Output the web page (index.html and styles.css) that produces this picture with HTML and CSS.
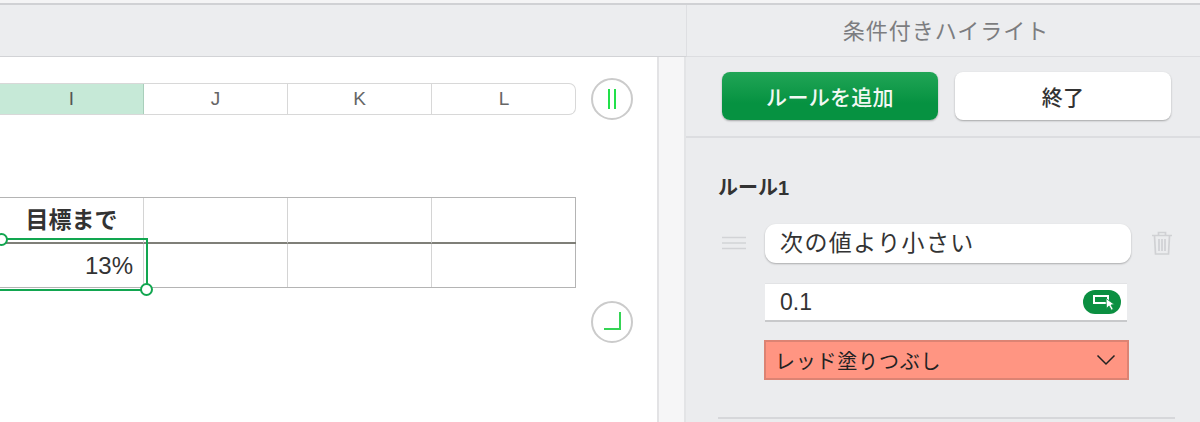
FILE: index.html
```html
<!DOCTYPE html>
<html lang="ja">
<head>
<meta charset="utf-8">
<title>条件付きハイライト</title>
<link rel="stylesheet" href="styles.css">
</head>
<body>
<div class="app">
  <div class="topstrip"></div>
  <div class="header">
    <div class="header-left"></div>
    <div class="header-title">条件付きハイライト</div>
  </div>
  <div class="body">
    <main class="sheet">
      <div class="col-row">
        <div class="columns">
          <div class="col col-active">I</div>
          <div class="col">J</div>
          <div class="col">K</div>
          <div class="col">L</div>
        </div>
        <div class="round-btn">
          <svg width="12" height="24" viewBox="0 0 12 24"><path d="M3 2v20M9 2v20" stroke="#22e04a" stroke-width="2" fill="none"/></svg>
        </div>
      </div>
      <div class="table-row">
        <div class="table">
          <div class="cell cell-head">目標まで</div>
          <div class="cell cell-head"></div>
          <div class="cell cell-head"></div>
          <div class="cell cell-head cell-last"></div>
          <div class="cell cell-value">13%</div>
          <div class="cell"></div>
          <div class="cell"></div>
          <div class="cell cell-last"></div>
          <div class="selection">
            <span class="handle handle-tl"></span>
            <span class="handle handle-br"></span>
          </div>
        </div>
      </div>
      <div class="corner-row">
        <div class="round-btn">
          <svg width="20" height="20" viewBox="0 0 20 20"><path d="M2 17h16V0" stroke="#35d455" stroke-width="2" fill="none"/></svg>
        </div>
      </div>
    </main>
    <div class="scrollbar"></div>
    <aside class="panel">
      <div class="actions">
        <button class="btn btn-green">ルールを追加</button>
        <button class="btn btn-white">終了</button>
      </div>
      <section class="rule">
        <h2 class="rule-title">ルール1</h2>
        <div class="rule-line">
          <svg class="grip" width="24" height="14" viewBox="0 0 24 14"><path d="M0 1.500h24M0 7h24M0 12.500h24" stroke="#d2d3d6" stroke-width="1.600"/></svg>
          <div class="select">次の値より小さい</div>
          <svg class="trash" width="22" height="26" viewBox="0 0 22 26"><path d="M1 5.500h20M7.500 5V2.500h7V5M3.500 6l1 18h13l1-18M8 9v12M11 9v12M14 9v12" stroke="#d0d1d4" stroke-width="1.700" fill="none"/></svg>
        </div>
        <div class="value-field">
          <span>0.1</span>
          <span class="pick">
            <svg width="28" height="18" viewBox="0 0 28 18"><path d="M6 3h14v7H6z" stroke="#fff" stroke-width="2" fill="none"/><path d="M18 5.500l.5 10 2.500-2.600 2.400 4.300 1.900-1-2.300-4.200 3.500-.5z" fill="#fff" stroke="#0b8f41" stroke-width=".8"/></svg>
          </span>
        </div>
        <div class="fill-select">
          <span>レッド塗りつぶし</span>
          <svg width="20" height="12" viewBox="0 0 20 12"><path d="M1.500 1.500l8.500 8.500 8.500-8.500" stroke="#222" stroke-width="1.500" fill="none"/></svg>
        </div>
      </section>
      <div class="rule-divider"></div>
    </aside>
  </div>
</div>
</body>
</html>
```

FILE: styles.css
```css
* { box-sizing: border-box; }
html, body { margin: 0; padding: 0; height: 422px; overflow: hidden; background: #fff; }
body { font-family: "Liberation Sans", "Noto Sans CJK JP", sans-serif; color: #333; }
.app { display: flex; flex-direction: column; width: 1200px; height: 422px; }
.topstrip { height: 5px; border-bottom: 2px solid #d0d1d4; background: #f4f4f5; }
.header { display: flex; height: 52px; flex: none; background: #ecedef; border-bottom: 1px solid #dcdde0; }
.header-left { width: 687px; border-right: 1px solid #dedfe2; border-bottom: 1px solid #d2d3d6; margin-bottom: -1px; }
.header-title { flex: 1; text-align: center; font-size: 22px; line-height: 54px; height: 51px; overflow: hidden; color: #7c7d80; letter-spacing: 1px; padding-left: 5px; }
.body { display: flex; flex: 1; min-height: 0; }
.sheet { width: 657px; flex: none; background: #fff; padding-top: 26px; }
.col-row { display: flex; align-items: center; height: 32px; }
.columns { display: grid; grid-template-columns: repeat(4, 144px); height: 32px; width: 576px; border: 1px solid #d8d8d8; border-left: 0; border-radius: 0 7px 7px 0; }
.col { font-size: 19px; line-height: 30px; text-align: center; color: #666; border-right: 1px solid #d8d8d8; }
.col:last-child { border-right: 0; }
.col-active { background: #c6e9d7; border-right-color: #a9cfbb; color: #555; }
.round-btn { width: 42px; height: 42px; margin-left: 15px; border-radius: 50%; border: 2px solid #cbcbcb; background: #fff; display: flex; align-items: center; justify-content: center; flex: none; }
.table-row { padding-top: 82px; }
.table { position: relative; display: grid; grid-template-columns: repeat(4, 144px); grid-template-rows: 46px 43px; width: 576px; border-top: 1px solid #b4b4b4; border-bottom: 1px solid #b4b4b4; border-right: 1px solid #b4b4b4; height: 91px; }
.cell { border-right: 1px solid #d4d4d4; }
.cell-last { border-right: 0; }
.cell-head { border-bottom: 2px solid #7f7f78; font-size: 23px; font-weight: 700; text-align: center; line-height: 44px; color: #333; }
.cell-value { font-size: 24px; line-height: 43px; text-align: right; padding-right: 10px; color: #333; }
.selection { position: absolute; left: -10px; top: 40px; width: 158px; height: 53px; border: 2px solid #12a650; }
.handle { position: absolute; width: 13px; height: 13px; border-radius: 50%; border: 2px solid #12a650; background: #fff; }
.handle-tl { left: 3px; top: -7px; }
.handle-br { right: -7px; bottom: -7px; }
.corner-row { display: flex; justify-content: flex-end; margin-top: 13px; padding-right: 24px; }
.scrollbar { width: 29px; flex: none; background: #f6f6f7; border-left: 2px solid #e3e3e5; border-right: 2px solid #e3e4e6; }
.panel { flex: 1; background: #ebecee; }
.actions { display: flex; gap: 17px; height: 81px; padding: 15px 29px 0 36px; border-bottom: 2px solid #dcdde0; }
.btn { width: 216px; height: 48px; border: 0; border-radius: 8px; font: 500 21px "Liberation Sans", "Noto Sans CJK JP", sans-serif; letter-spacing: .3px; padding: 0; }
.btn-green { color: #f2f8f4; background: linear-gradient(#21a556, #069241 65%); box-shadow: 0 1px 2px rgba(0,0,0,.3); }
.btn-white { color: #333; background: #fff; box-shadow: 0 1px 2px rgba(0,0,0,.3); }
.rule { padding: 37px 0 0 32px; }
.rule-title { margin: 0; font-size: 20px; line-height: 26px; font-weight: 700; color: #333; }
.rule-line { display: flex; align-items: center; margin-top: 22px; height: 40px; }
.grip { flex: none; margin-left: 4px; }
.select { width: 366px; height: 39px; margin-left: 19px; border-radius: 11px; background: #fff; box-shadow: 0 1px 2px rgba(0,0,0,.28); font-size: 23px; line-height: 38px; padding-left: 15px; color: #333; letter-spacing: 1.400px; white-space: nowrap; }
.trash { flex: none; margin-left: 20px; }
.value-field { display: flex; align-items: center; justify-content: space-between; width: 362px; height: 39px; margin: 20px 0 0 47px; background: #fff; border-bottom: 2px solid #c8c9cb; border-top: 1px solid #e2e3e5; padding: 1px 6px 0 15px; font-size: 23px; color: #333; }
.pick { width: 38px; height: 24px; margin-top: -2px; border-radius: 12px; background: #0b8f41; display: flex; align-items: center; justify-content: center; }
.fill-select { display: flex; align-items: center; justify-content: space-between; width: 365px; height: 40px; margin: 18px 0 0 46px; background: #ff9582; border: 2px solid #dc8373; padding: 0 11px 0 9px; font-size: 20px; color: #222; letter-spacing: .75px; white-space: nowrap; }
.rule-divider { height: 2px; margin: 37px 25px 0 32px; background: #d6d7da; }
```
